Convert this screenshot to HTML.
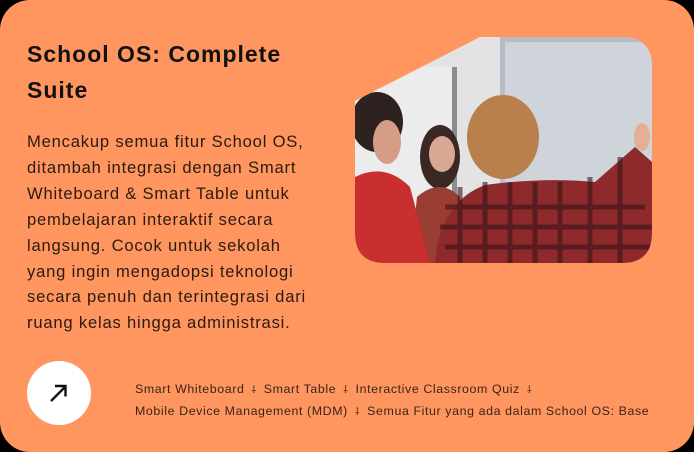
<!DOCTYPE html>
<html><head><meta charset="utf-8"><style>
html,body{margin:0;padding:0;background:#000;}
.card{position:relative;width:694px;height:452px;background:#FF965F;border-radius:30px;overflow:hidden;font-family:"Liberation Sans",sans-serif;color:#1c1c1c;}
h1{position:absolute;left:27px;top:36px;margin:0;font-size:23px;line-height:36px;font-weight:bold;letter-spacing:1px;width:320px;color:#111;}
p{position:absolute;left:27px;top:129px;margin:0;font-size:16.6px;line-height:25.9px;letter-spacing:0.8px;white-space:nowrap;color:#2a1a12;}
.btn{position:absolute;left:27px;top:361px;width:64px;height:64px;border-radius:50%;background:#fff;}
.tags{position:absolute;left:135px;top:379px;font-size:12.4px;line-height:20px;letter-spacing:0.6px;color:#3a2418;white-space:nowrap;}
.s{font-size:10px;margin:0 7px;}
svg.img{position:absolute;left:355px;top:37px;}
</style></head><body><div class="card">
<h1>School OS: Complete<br>Suite</h1>
<p>Mencakup semua fitur School OS,<br>ditambah integrasi dengan Smart<br>Whiteboard &amp; Smart Table untuk<br>pembelajaran interaktif secara<br>langsung. Cocok untuk sekolah<br>yang ingin mengadopsi teknologi<br>secara penuh dan terintegrasi dari<br>ruang kelas hingga administrasi.</p>
<div class="btn"><svg width="64" height="64" viewBox="0 0 64 64"><path d="M24 40 L38 26 M28 25 H38.5 V35.5" stroke="#111" stroke-width="2.4" fill="none"/></svg></div>
<div class="tags">Smart Whiteboard<span class="s">⸸</span>Smart Table<span class="s">⸸</span>Interactive Classroom Quiz<span class="s">⸸</span><br>Mobile Device Management (MDM)<span class="s">⸸</span>Semua Fitur yang ada dalam School OS: Base</div>
<svg class="img" width="297" height="226" viewBox="0 0 297 226">
<defs><clipPath id="c"><path d="M0 64 L125 0 H267 Q297 0 297 30 V196 Q297 226 267 226 H30 Q0 226 0 196 Z"/></clipPath></defs>
<g clip-path="url(#c)">
<rect width="297" height="226" fill="#e4e3e4"/>
<rect x="0" y="30" width="100" height="200" fill="#ececec"/>
<rect x="97" y="30" width="5" height="150" fill="#8a8c92"/>
<rect x="145" y="0" width="160" height="200" fill="#b7bcc6"/>
<rect x="150" y="5" width="150" height="190" fill="#cfd3da"/>
<rect x="140" y="195" width="160" height="40" fill="#e9e8e7"/>
<ellipse cx="85" cy="120" rx="20" ry="32" fill="#3a2824"/>
<ellipse cx="87" cy="117" rx="13" ry="18" fill="#d9a893"/>
<path d="M55 226 L62 160 Q85 140 105 160 L110 226Z" fill="#9a3d33"/>
<ellipse cx="22" cy="85" rx="26" ry="30" fill="#2d221f"/>
<ellipse cx="32" cy="105" rx="14" ry="22" fill="#d59c86"/>
<path d="M0 226 V140 Q30 125 55 150 L75 226Z" fill="#c92f2f"/>
<ellipse cx="148" cy="100" rx="36" ry="42" fill="#b9804d"/>
<path d="M80 226 Q85 165 130 148 Q190 140 240 145 L280 110 L297 125 V226Z" fill="#8e2a2c"/>
<path d="M90 170 H290 M85 190 H297 M90 210 H297 M105 150 V226 M130 145 V226 M155 145 V226 M180 145 V226 M205 145 V226 M235 140 V226 M265 120 V226" stroke="#3a1418" stroke-width="5" opacity=".6"/>
<ellipse cx="287" cy="100" rx="8" ry="14" fill="#e3b096"/>
</g></svg>
</div></body></html>
